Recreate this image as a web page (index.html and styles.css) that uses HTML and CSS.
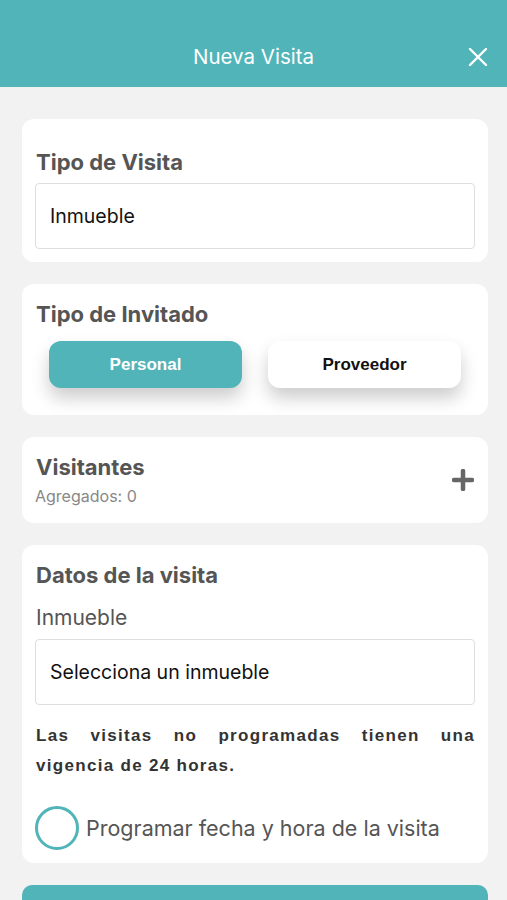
FILE: index.html
```html
<!DOCTYPE html>
<html lang="es">
<head>
  <meta charset="UTF-8" />
  <meta name="viewport" content="width=device-width, initial-scale=1.0" />
  <title>Nueva Visita</title>
  <link rel="stylesheet" href="styles.css">
</head>
<body>
  <header class="topbar">
    <h1 class="topbar-title">Nueva Visita</h1>
    <button class="close" aria-label="Cerrar">
      <svg width="20" height="20" viewBox="0 0 20 20">
        <path d="M2 2 L18 18 M18 2 L2 18" stroke="#fff" stroke-width="2.4" stroke-linecap="round" fill="none" />
      </svg>
    </button>
  </header>

  <main class="content">
    <section class="card">
      <h2 class="card-title first">Tipo de Visita</h2>
      <div class="field">Inmueble</div>
    </section>

    <section class="card">
      <h2 class="card-title">Tipo de Invitado</h2>
      <div class="toggle">
        <button class="toggle-btn active">Personal</button>
        <button class="toggle-btn">Proveedor</button>
      </div>
    </section>

    <section class="card card-visitors">
      <div>
        <h2 class="card-title">Visitantes</h2>
        <div class="muted">Agregados: 0</div>
      </div>
      <svg class="plus" width="22" height="22" viewBox="0 0 22 22">
        <path d="M11 2 V20 M2 11 H20" stroke="#666" stroke-width="4.5" stroke-linecap="round" fill="none" />
      </svg>
    </section>

    <section class="card">
      <h2 class="card-title">Datos de la visita</h2>
      <label class="label">Inmueble</label>
      <div class="field">Selecciona un inmueble</div>
      <p class="notice">Las visitas no programadas tienen una vigencia de 24 horas.</p>
      <div class="radio-row">
        <span class="radio"></span>
        <span class="radio-text">Programar fecha y hora de la visita</span>
      </div>
    </section>

    <button class="submit"></button>
  </main>
</body>
</html>
```

FILE: styles.css
```css
:root {
  font-family: Inter, "Noto Sans", sans-serif;
}

body {
  margin: 0;
  background: #f2f2f2;
  overflow: hidden;
}

.topbar {
  position: relative;
  display: flex;
  align-items: flex-end;
  justify-content: center;
  height: 87px;
  background: #50b4b9;
}

.topbar-title {
  margin: 0 0 18px;
  font-size: 20.5px;
  font-weight: 400;
  color: #fff;
}

.close {
  position: absolute;
  right: 19px;
  bottom: 20px;
  padding: 0;
  border: none;
  background: none;
  line-height: 0;
}

.content {
  display: flex;
  flex-direction: column;
  gap: 22px;
  padding: 32px 19px 0 22px;
}

.card {
  background: #fff;
  border-radius: 12px;
  padding: 13px;
}

.card-title {
  margin: 4px 0 0 1px;
  font-size: 22px;
  font-weight: 700;
  color: #555;
  line-height: 26px;
}

.card-title.first {
  margin: 17px 0 8px 1px;
}

.field {
  height: 64px;
  display: flex;
  align-items: center;
  padding-left: 14px;
  border: 1px solid #dedede;
  border-radius: 4px;
  font-size: 19.5px;
  color: #111;
}

.toggle {
  display: flex;
  justify-content: space-between;
  padding: 14px 14px 14px;
}

.toggle-btn {
  width: 193px;
  height: 47px;
  border: none;
  border-radius: 12px;
  background: #fff;
  font-family: "Liberation Sans", Arial, sans-serif;
  font-size: 17px;
  font-weight: 700;
  color: #111;
  box-shadow: 0 10px 18px rgba(0, 0, 0, 0.2);
}

.toggle-btn.active {
  background: #50b4b9;
  color: #fff;
}

.card-visitors {
  display: flex;
  align-items: center;
  justify-content: space-between;
  padding: 0 13px 0 13px;
  height: 86px;
}

.card-visitors .card-title {
  margin: 0 0 6px 1px;
}

.muted {
  font-size: 16px;
  line-height: 20px;
  color: #888;
}

.plus {
  margin-right: 1px;
}

.label {
  display: block;
  margin: 17px 0 8px 1px;
  font-size: 21px;
  line-height: 26px;
  color: #555;
}

.notice {
  margin: 16px 0 0 1px;
  text-align: justify;
  font-family: "Liberation Sans", Arial, sans-serif;
  font-size: 17px;
  font-weight: 700;
  letter-spacing: 1.3px;
  line-height: 30px;
  color: #333;
}

.radio-row {
  display: flex;
  align-items: center;
  gap: 7px;
  margin-top: 25px;
}

.radio {
  box-sizing: border-box;
  width: 44px;
  height: 44px;
  border: 3px solid #50b4b9;
  border-radius: 50%;
}

.radio-text {
  font-size: 21.5px;
  line-height: 26px;
  color: #555;
}

.submit {
  height: 50px;
  border: none;
  border-radius: 10px;
  background: #50b4b9;
}
```
